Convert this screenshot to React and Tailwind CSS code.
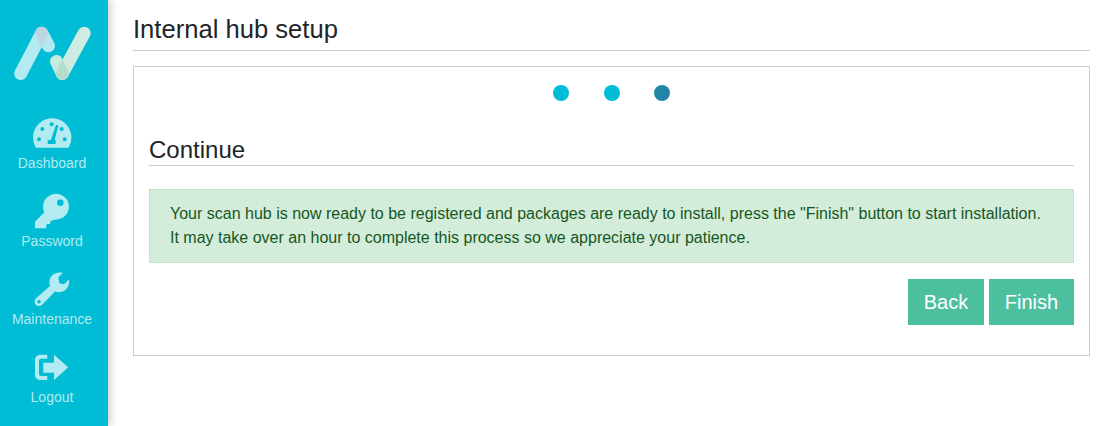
import React from 'react';

const ICON = '#b2ebf2';
const BG = '#00bcd4';

const Logo = () => (
  <svg width="84" height="68" viewBox="0 0 84 68" fill="none" strokeLinecap="round" strokeWidth="13">
    <defs>
      <mask id="logo-left" maskUnits="userSpaceOnUse" x="0" y="0" width="84" height="68">
        <path d="M10.7 53.5 L31.7 13.2" stroke="#fff" />
      </mask>
      <mask id="logo-right" maskUnits="userSpaceOnUse" x="0" y="0" width="84" height="68">
        <path d="M52.3 53.5 L74.2 13.2" stroke="#fff" />
      </mask>
    </defs>
    <path d="M10.7 53.5 L31.7 13.2" stroke="#b2ebf2" />
    <path d="M31.7 13.2 L38.5 25.8" stroke="#b2e8f0" />
    <path d="M31.7 13.2 L38.5 25.8" stroke="#bfd5e4" mask="url(#logo-left)" />
    <path d="M52.3 53.5 L74.2 13.2" stroke="#ceece2" />
    <path d="M46.5 41.5 L52.3 53.5" stroke="#c6ecdf" />
    <path d="M46.5 41.5 L52.3 53.5" stroke="#b4ddce" mask="url(#logo-right)" />
  </svg>
);

const DashboardIcon = () => (
  <svg width="40" height="40" viewBox="0 0 40 40">
    <path d="M3.9 34.7 A19.2 19.2 0 1 1 36.5 34.7 Z" fill={ICON} />
    <g fill={BG}>
      <circle cx="19.7" cy="11.3" r="2" />
      <circle cx="10.3" cy="16" r="2" />
      <circle cx="7" cy="26.3" r="2" />
      <circle cx="29.7" cy="16" r="2" />
      <circle cx="32.7" cy="26.3" r="2" />
      <path d="M24 12 L26.4 12.6 L22.6 27 H23.7 V31 H15.7 V27 H18.8 Z" />
    </g>
  </svg>
);

const KeyIcon = () => (
  <svg width="40" height="40" viewBox="0 0 40 40">
    <circle cx="24" cy="15.7" r="12.9" fill={ICON} />
    <path d="M3 30.7 L13.5 20 L24 28.3 L18.6 30 L18 33 L14.7 33 L14 37.3 L3 37.3 Z" fill={ICON} />
    <circle cx="28.3" cy="11.7" r="3.3" fill={BG} />
  </svg>
);

const WrenchIcon = () => (
  <svg width="40" height="40" viewBox="0 0 40 40">
    <path
      fillRule="evenodd"
      d="M3.8 29.6 L18 17 C16.6 13 17.4 9.3 20 6.6 C22.6 3.8 26.6 3 30.7 3.8 L26.3 8.4 L27.3 14.3 L32 15.2 L37 10.2 C37.8 14 36.6 17.8 34 20.4 C31 23.2 27.2 23.8 23 22.6 L9.9 36 C8 37.6 5.2 37.4 3.6 35.6 C2.2 34 2.2 31.2 3.8 29.6 Z M7 31 A1.8 1.8 0 1 0 7 34.6 A1.8 1.8 0 1 0 7 31 Z"
      fill={ICON}
    />
  </svg>
);

const LogoutIcon = () => (
  <svg width="40" height="40" viewBox="0 0 40 40">
    <path
      d="M15.3 7.7 H8.5 C5.2 7.7 3 10 3 13 V27.7 C3 30.8 5.2 33 8.5 33 H15.3 V29 H9 C7.8 29 7 28.2 7 27 V13.7 C7 12.5 7.8 11.7 9 11.7 H15.3 Z"
      fill={ICON}
    />
    <path d="M11.3 15.7 H22 V7.7 L36.3 20.3 L22 33 V25.7 H11.3 Z" fill={ICON} />
  </svg>
);

const navItems = [
  { label: 'Dashboard', Icon: DashboardIcon },
  { label: 'Password', Icon: KeyIcon },
  { label: 'Maintenance', Icon: WrenchIcon },
  { label: 'Logout', Icon: LogoutIcon },
];

const Dot = ({ active }) => (
  <span className={`block w-4 h-4 rounded-full ${active ? 'bg-[#2386a8]' : 'bg-[#00bcd4]'}`} />
);

const App = () => {
  return (
    <div className="h-[426px] flex bg-white overflow-hidden font-['Liberation_Sans',Arial,sans-serif] text-[#212529]">
      <aside className="w-[108px] shrink-0 bg-[#00bcd4] pr-1 shadow-[3px_0_8px_rgba(0,0,0,0.18)] z-10">
        <div className="h-[113px] flex justify-center pt-5">
          <Logo />
        </div>
        <nav className="flex flex-col">
          {navItems.map(({ label, Icon }) => (
            <a key={label} href="#" className="h-[78px] flex flex-col items-center text-[14px] leading-5 text-[#b2ebf2]">
              <Icon />
              <span>{label}</span>
            </a>
          ))}
        </nav>
      </aside>

      <main className="flex-grow pl-[25px] pr-[19px]">
        <h1 className="text-[25.6px] leading-[30px] pt-[14px] pb-[6px] border-b border-[#cccccc]">
          Internal hub setup
        </h1>

        <section className="mt-[15px] border border-[#cccccc] px-[15px] pt-[18px] h-[290px]">
          <div className="flex justify-center gap-[34.5px]">
            <Dot />
            <Dot />
            <Dot active />
          </div>

          <h2 className="mt-[34px] text-[24px] leading-[29px] pb-px border-b border-[#cccccc]">Continue</h2>

          <div className="mt-[23px] border border-[#c3e6cb] bg-[#d4edda] text-[#155724] text-[16px] leading-6 px-5 py-3">
            <p>Your scan hub is now ready to be registered and packages are ready to install, press the "Finish" button to start installation.</p>
            <p>It may take over an hour to complete this process so we appreciate your patience.</p>
          </div>

          <div className="mt-4 flex justify-end gap-[5px]">
            <button className="h-[46px] w-[76px] bg-[#4cbf9f] text-white text-[20px]">Back</button>
            <button className="h-[46px] w-[85px] bg-[#4cbf9f] text-white text-[20px]">Finish</button>
          </div>
        </section>
      </main>
    </div>
  );
};

export default App;
